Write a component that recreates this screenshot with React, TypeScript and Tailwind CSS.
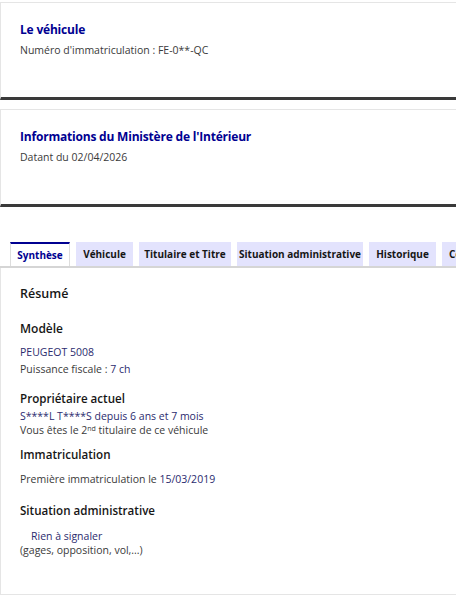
import React from "react";

const font = { fontFamily: "'Open Sans', 'Noto Sans', sans-serif" };

function Card({ title, sub }: { title: string; sub: string }) {
  return (
    <div className="w-[480px] h-[98px] border-l border-t border-[#e5e5e5] border-b-[3px] border-b-[#3a3a3a] px-[19px] pt-[17px]">
      <div className="text-[12px] font-bold text-[#000091] leading-[20px] tracking-[-0.2px]">{title}</div>
      <div className="text-[10.5px] text-[#3a3a3a] leading-[16px] mt-[2px]">{sub}</div>
    </div>
  );
}

const tabs: [string, string][] = [
  ["Véhicule", "w-[57px]"],
  ["Titulaire et Titre", "w-[92px]"],
  ["Situation administrative", "w-[126px]"],
  ["Historique", "w-[67px]"],
  ["Contrôles techniques", "w-[120px]"],
];

export default function App() {
  return (
    <div className="w-[456px] h-[600px] overflow-hidden bg-white" style={font}>
      <div className="pt-[2px]">
        <Card title="Le véhicule" sub="Numéro d'immatriculation : FE-0**-QC" />
      </div>
      <div className="pt-[9px]">
        <Card title="Informations du Ministère de l'Intérieur" sub="Datant du 02/04/2026" />
      </div>
      <div className="mt-[35px] w-[600px]">
        <div className="flex gap-[6px] pl-[10px] border-b-[2px] border-[#d5d5d5] whitespace-nowrap">
          <div className="w-[60px] h-[24px] bg-white border-t-2 border-[#000091] border-x border-x-[#dddddd] text-[10px] font-bold text-[#000091] flex items-center justify-center">Synthèse</div>
          {tabs.map(([t, w]) => (
            <div key={t} className={`${w} shrink-0 h-[24px] bg-[#e3e3fd] text-[10px] font-bold text-[#161616] flex items-center justify-center`}>{t}</div>
          ))}
        </div>
        <div className="w-[480px] h-[327px] border-l border-b border-[#e5e5e5] px-[19px] pt-[16px] text-[#161616]">
          <div className="text-[12.5px] font-semibold leading-[20px]">Résumé</div>
          <div className="text-[12px] font-semibold leading-[20px] mt-[15px]">Modèle</div>
          <div className="text-[10.5px] leading-[16px] mt-[5px] text-[#2b2b6e]">PEUGEOT 5008</div>
          <div className="text-[10.5px] leading-[16px] mt-[1px] text-[#3a3a3a]">Puissance fiscale : <span className="text-[#2b2b6e]">7 ch</span></div>
          <div className="text-[11.6px] font-semibold leading-[20px] mt-[12px]">Propriétaire actuel</div>
          <div className="text-[10.5px] leading-[14px] text-[#2b2b6e]">S****L T****S depuis 6 ans et 7 mois</div>
          <div className="text-[10.5px] leading-[14px] text-[#3a3a3a]">Vous êtes le 2<sup className="text-[7px]">nd</sup> titulaire de ce véhicule</div>
          <div className="text-[11.6px] font-semibold leading-[20px] mt-[8px]">Immatriculation</div>
          <div className="text-[10.5px] leading-[16px] mt-[6px] text-[#3a3a3a]">Première immatriculation le <span className="text-[#2b2b6e]">15/03/2019</span></div>
          <div className="text-[11.6px] font-semibold leading-[20px] mt-[14px]">Situation administrative</div>
          <div className="text-[10.5px] leading-[14px] mt-[8px] pl-[11px] text-[#2b2b6e]">Rien à signaler</div>
          <div className="text-[10.5px] leading-[14px] text-[#3a3a3a]">(gages, opposition, vol,...)</div>
        </div>
      </div>
    </div>
  );
}
